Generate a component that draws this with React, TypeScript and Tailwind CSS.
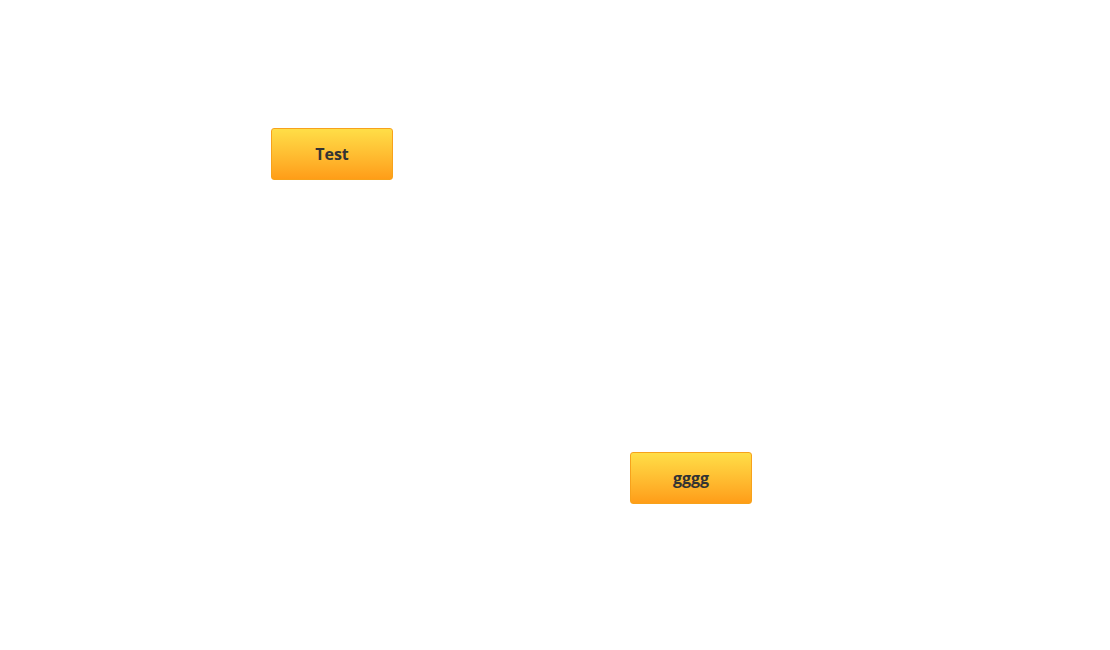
export default function App() {
  const btn =
    "absolute flex h-[52px] w-[122px] items-center justify-center rounded-[3px] border border-[#f7a21b] bg-gradient-to-b from-[#ffde47] to-[#ff9d17] text-[16px] font-bold text-[#333333] [font-family:'Open_Sans',sans-serif]";
  return (
    <div className="relative h-[650px] w-[1110px] bg-white">
      <button className={btn + " left-[271px] top-[128px]"}>Test</button>
      <button className={btn + " left-[630px] top-[452px]"}>gggg</button>
    </div>
  );
}
